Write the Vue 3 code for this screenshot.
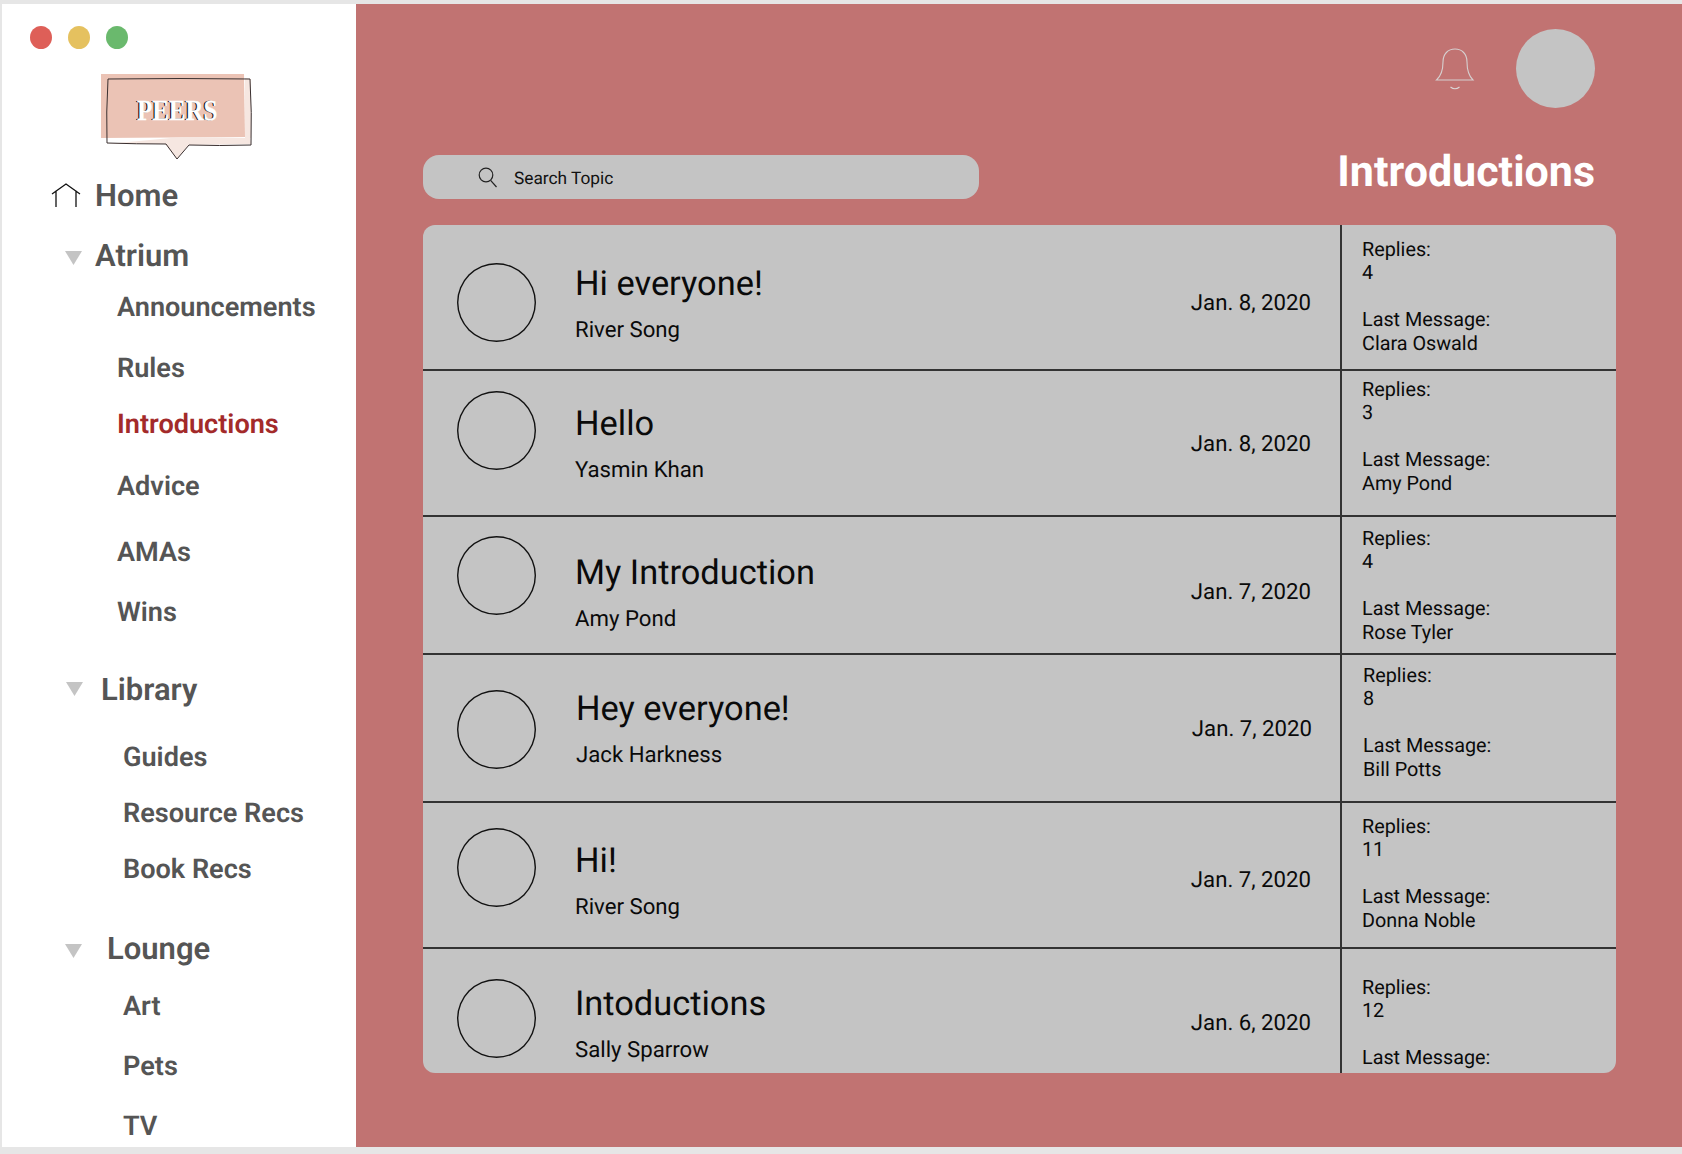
<script setup>
const navItems = [
  { label: 'Home', kind: 'home', y: 196, x: 95 },
  { label: 'Atrium', kind: 'group', y: 256, x: 95 },
  { label: 'Announcements', kind: 'sub', y: 307, x: 117 },
  { label: 'Rules', kind: 'sub', y: 368, x: 117 },
  { label: 'Introductions', kind: 'sub active', y: 424, x: 117 },
  { label: 'Advice', kind: 'sub', y: 486, x: 117 },
  { label: 'AMAs', kind: 'sub', y: 552, x: 117 },
  { label: 'Wins', kind: 'sub', y: 612, x: 117 },
  { label: 'Library', kind: 'group', y: 690, x: 101 },
  { label: 'Guides', kind: 'sub', y: 757, x: 123 },
  { label: 'Resource Recs', kind: 'sub', y: 813, x: 123 },
  { label: 'Book Recs', kind: 'sub', y: 869, x: 123 },
  { label: 'Lounge', kind: 'group', y: 949, x: 107 },
  { label: 'Art', kind: 'sub', y: 1006, x: 123 },
  { label: 'Pets', kind: 'sub', y: 1066, x: 123 },
  { label: 'TV', kind: 'sub', y: 1126, x: 123 },
]
const navRows = navItems.map((item, i) => ({
  ...item,
  gap: i === 0 ? 0 : item.y - navItems[i - 1].y - 36,
  indent: item.x - 2,
}))

const topics = [
  { title: 'Hi everyone!', author: 'River Song', date: 'Jan. 8, 2020', replies: 4, last: 'Clara Oswald', h: 146, a: 38, t: 39, d: 63, s: 13, shift: 0 },
  { title: 'Hello', author: 'Yasmin Khan', date: 'Jan. 8, 2020', replies: 3, last: 'Amy Pond', h: 146, a: 20, t: 33, d: 58, s: 7, shift: 0 },
  { title: 'My Introduction', author: 'Amy Pond', date: 'Jan. 7, 2020', replies: 4, last: 'Rose Tyler', h: 138, a: 19, t: 36, d: 60, s: 10, shift: 0 },
  { title: 'Hey everyone!', author: 'Jack Harkness', date: 'Jan. 7, 2020', replies: 8, last: 'Bill Potts', h: 148, a: 35, t: 34, d: 59, s: 9, shift: 1 },
  { title: 'Hi!', author: 'River Song', date: 'Jan. 7, 2020', replies: 11, last: 'Donna Noble', h: 146, a: 25, t: 38, d: 62, s: 12, shift: 0 },
  { title: 'Intodunctions'.replace('dun', 'du'), author: 'Sally Sparrow', date: 'Jan. 6, 2020', replies: 12, last: '', h: 124, a: 30, t: 35, d: 59, s: 27, shift: 0 },
]
</script>

<template>
  <div class="frame">
    <aside class="sidebar">
      <div class="lights">
        <span class="light red"></span>
        <span class="light yellow"></span>
        <span class="light green"></span>
      </div>
      <div class="logo">
        <svg class="logo-art" width="154" height="90" viewBox="0 0 154 90">
          <path d="M0 1 L143 1 L144 64 L0 65 Z" fill="#ebc3b5" />
          <path d="M6 71 L64 71 L76 86 L88 72 L150 71 L149 65 L86 64 L70 65 Z" fill="#f6e7e1" />
          <path d="M144 5 L150 6 L150 65 L144 65 Z" fill="#f6e7e1" />
          <path d="M7 6 Q80 5 149 6 Q151 40 150 72 Q118 73 88 72 L76 86 L65 71 Q35 71 6 70 Q5 40 7 6 Z" fill="none" stroke="#3a3030" stroke-width="1" />
        </svg>
        <span class="logo-text">PEERS</span>
      </div>
      <nav class="nav">
        <div
          v-for="item in navRows"
          :key="item.label"
          class="nav-item"
          :class="item.kind"
          :style="{ marginTop: item.gap + 'px', paddingLeft: item.indent + 'px' }"
        >
          <svg v-if="item.kind === 'home'" class="home-icon" width="30" height="26" viewBox="0 0 30 26">
            <path d="M1 12 L15 2 L29 12 M5 8.5 V25 M25 8.5 V25" fill="none" stroke="#111" stroke-width="1.3" />
          </svg>
          <svg v-if="item.kind === 'group'" class="caret" :class="'caret-' + item.label.toLowerCase()" width="18" height="15" viewBox="0 0 18 15">
            <path d="M0 1 H17 L8.5 15 Z" fill="#c4c4c4" />
          </svg>
          {{ item.label }}
        </div>
      </nav>
    </aside>

    <main class="main">
      <header class="top">
        <svg class="bell" width="40" height="44" viewBox="0 0 40 44">
          <path d="M1.5 33 H38 C33 28 32 22 32 15 C32 7 27 2 20 2 C13 2 8 7 8 15 C8 22 7 28 1.5 33 Z" fill="none" stroke="#d6d0d0" stroke-width="1.1" />
          <path d="M15.5 40 Q20 43.5 24.5 40" fill="none" stroke="#dcd6d6" stroke-width="1.1" />
        </svg>
        <div class="me"></div>
      </header>

      <div class="toolbar">
        <div class="search">
          <svg class="search-icon" width="20" height="21" viewBox="0 0 20 21">
            <circle cx="8" cy="8" r="6.8" fill="none" stroke="#222" stroke-width="1.2" />
            <path d="M12.6 13.4 L18.5 20" fill="none" stroke="#222" stroke-width="1.2" />
          </svg>
          <span>Search Topic</span>
        </div>
        <h1>Introductions</h1>
      </div>

      <section class="list">
        <article
          v-for="(topic, i) in topics"
          :key="i"
          class="row"
          :style="{ height: topic.h + 'px' }"
        >
          <div class="cell-main">
            <div class="avatar" :style="{ marginTop: topic.a + 'px' }"></div>
            <div class="text" :style="{ marginTop: topic.t + 'px', marginLeft: 39 + topic.shift + 'px' }">
              <div class="title">{{ topic.title }}</div>
              <div class="author">{{ topic.author }}</div>
            </div>
            <div class="date" :style="{ marginTop: topic.d + 'px', marginRight: 29 - topic.shift + 'px' }">{{ topic.date }}</div>
          </div>
          <div class="cell-stats" :style="{ paddingTop: topic.s + 'px', paddingLeft: 20 + topic.shift + 'px' }">
            <div>Replies:</div>
            <div>{{ topic.replies }}</div>
            <div class="blank"></div>
            <div>Last Message:</div>
            <div>{{ topic.last }}</div>
          </div>
        </article>
      </section>
    </main>
  </div>
</template>

<style>
html, body {
  margin: 0;
  background: #e6e6e6;
}
</style>

<style scoped>
.frame {
  display: flex;
  width: 1682px;
  height: 1154px;
  padding: 4px 0 7px 2px;
  box-sizing: border-box;
  overflow: hidden;
  background: #e6e6e6;
  font-family: Roboto, "Liberation Sans", sans-serif;
  text-rendering: geometricPrecision;
}
.sidebar {
  width: 354px;
  flex: none;
  background: #fff;
  overflow: hidden;
}
.lights {
  display: flex;
  gap: 16px;
  padding: 22px 0 0 28px;
}
.light {
  width: 22px;
  height: 23px;
  border-radius: 50%;
}
.red { background: #de5f58; }
.yellow { background: #e5c15f; }
.green { background: #6ab96d; }
.logo {
  position: relative;
  width: 154px;
  height: 90px;
  margin: 24px 0 0 99px;
}
.logo-art {
  display: block;
}
.logo-text {
  position: absolute;
  left: 36px;
  top: 24px;
  font-family: "Liberation Serif", serif;
  font-weight: 700;
  font-size: 29px;
  line-height: 29px;
  color: #fff;
  -webkit-text-stroke: 0.3px #fff;
  text-shadow: -1.5px 0 0 #000;
  transform: scaleX(0.86);
  transform-origin: left center;
}
.nav {
  margin-top: 15px;
}
.nav-item {
  position: relative;
  height: 36px;
  line-height: 36px;
  color: #555;
  font-weight: 700;
  white-space: nowrap;
}
.home, .group {
  font-size: 31px;
  font-weight: 600;
}
.sub {
  font-size: 27.1px;
  font-weight: 600;
}
.active {
  color: #a32a2a;
}
.home-icon {
  position: absolute;
  left: 49px;
  top: 4px;
}
.caret {
  position: absolute;
  top: 12px;
  left: 63px;
}
.caret-library {
  top: 9px;
  left: 64px;
}
.main {
  flex: 1;
  min-width: 0;
  background: #c17372;
  padding: 0 66px 0 67px;
  overflow: hidden;
}
.top {
  display: flex;
  justify-content: flex-end;
  align-items: flex-start;
  height: 151px;
  padding-right: 21px;
  box-sizing: border-box;
}
.bell {
  margin: 43px 41px 0 0;
}
.me {
  width: 79px;
  height: 79px;
  margin-top: 25px;
  border-radius: 50%;
  background: #c4c4c4;
}
.toolbar {
  display: flex;
  justify-content: space-between;
  align-items: flex-start;
  height: 70px;
  padding-right: 21px;
}
.toolbar h1 {
  margin: -8px 0 0;
  font-size: 43px;
  line-height: 50px;
  font-weight: 700;
  color: #fff;
}
.search {
  position: relative;
  width: 556px;
  height: 44px;
  display: flex;
  align-items: center;
  padding: 3px 0 0 91px;
  box-sizing: border-box;
  border-radius: 16px;
  background: #c4c4c4;
  font-size: 17.3px;
  color: #111;
}
.search-icon {
  position: absolute;
  left: 55px;
  top: 12px;
}
.list {
  width: 1193px;
  height: 848px;
  border-radius: 12px;
  overflow: hidden;
  background: #c4c4c4;
}
.row {
  display: flex;
  box-sizing: border-box;
  border-bottom: 2px solid #333;
  color: #0a0a0a;
}
.row:last-child {
  border-bottom: 0;
}
.cell-main {
  width: 919px;
  flex: none;
  display: flex;
  align-items: flex-start;
  padding-left: 34px;
  box-sizing: border-box;
  border-right: 2px solid #333;
}
.avatar {
  width: 79px;
  height: 79px;
  flex: none;
  border-radius: 50%;
  box-shadow: inset 0 0 0 1.4px #111;
}
.text {
  flex: 1;
}
.title {
  font-size: 34.4px;
  line-height: 40px;
}
.author {
  margin-top: 11px;
  font-size: 22.2px;
  line-height: 30px;
}
.date {
  font-size: 22.2px;
  line-height: 30px;
}
.cell-stats {
  flex: 1;
  font-size: 19.8px;
  line-height: 23.4px;
}
.cell-stats > div {
  min-height: 23.4px;
}
</style>
